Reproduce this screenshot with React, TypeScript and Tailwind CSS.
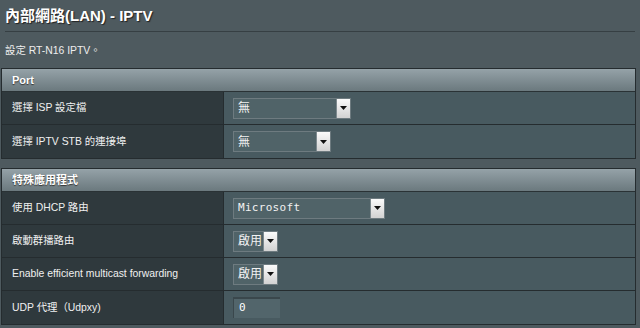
import React from "react";

const font = { fontFamily: '"Liberation Sans", Arial, "Noto Sans CJK TC", sans-serif' };

const Arrow = () => (
  <div className="w-[14px] h-[19px] flex items-center justify-center bg-gradient-to-b from-[#fbfbfb] to-[#d2d2d2] border-l border-[#7d898e]">
    <svg width="7" height="4" viewBox="0 0 7 4">
      <path d="M0 0h7L3.5 4z" fill="#111" />
    </svg>
  </div>
);

const Select = ({ value, width, mono }: { value: string; width: string; mono?: boolean }) => (
  <div className={`${width} h-[21px] flex items-stretch border border-[#6e7b80] bg-[#506368]`}>
    <div
      className={`flex-1 pl-[4px] flex items-center text-[#f2f2f2] ${mono ? "text-[11px] tracking-[0.3px]" : "text-[12px]"}`}
      style={mono ? { fontFamily: '"DejaVu Sans Mono", monospace' } : undefined}
    >
      {value}
    </div>
    <Arrow />
  </div>
);

const Row = ({ label, children, last }: { label: string; children: React.ReactNode; last?: boolean }) => (
  <div className={`flex h-[33px] ${last ? "" : "border-b border-[#252c2f]"}`}>
    <div className="w-[222px] bg-[#2f393d] border-r border-[#252c2f] pl-[10px] flex items-center text-[10.4px] text-[#f0f0f0]">
      {label}
    </div>
    <div className="flex-1 bg-[#485a60] pl-[9px] flex items-center">{children}</div>
  </div>
);

const Header = ({ title }: { title: string }) => (
  <div className="h-[23px] border-b border-[#2a3235] bg-gradient-to-b from-[#95a2a8] to-[#6b797e] pl-[10px] flex items-center text-[11px] font-bold text-white [text-shadow:0_1px_1px_#333]">
    {title}
  </div>
);

export default function App() {
  return (
    <div className="w-[640px] h-[328px] overflow-hidden bg-[#4e5a5f] pt-[6px]" style={font}>
      <div className="h-[20px] pl-[5px] leading-[20px] text-[15px] font-bold text-white [text-shadow:1px_1px_1px_#222]">
        內部網路(LAN) - IPTV
      </div>
      <div className="mt-[5px] mx-[5px] h-[1px] bg-[#363f43]" />
      <div className="mt-[10px] h-[18px] pl-[5px] leading-[18px] text-[10.4px] text-[#eeeeee]">設定 RT-N16 IPTV。</div>

      <div className="mt-[8px] ml-[1px] w-[635px] border border-[#252c2f]">
        <Header title="Port" />
        <Row label="選擇 ISP 設定檔">
          <Select value="無" width="w-[118px]" />
        </Row>
        <Row label="選擇 IPTV STB 的連接埠" last>
          <Select value="無" width="w-[98px]" />
        </Row>
      </div>

      <div className="mt-[9px] ml-[1px] w-[635px] border border-[#252c2f]">
        <Header title="特殊應用程式" />
        <Row label="使用 DHCP 路由">
          <Select value="Microsoft" width="w-[152px]" mono />
        </Row>
        <Row label="啟動群播路由">
          <Select value="啟用" width="w-[45px]" />
        </Row>
        <Row label="Enable efficient multicast forwarding">
          <Select value="啟用" width="w-[45px]" />
        </Row>
        <Row label="UDP 代理（Udpxy)" last>
          <div
            className="w-[47px] h-[21px] border-t-2 border-l border-[#3a474c] bg-[#52656b] pl-[5px] flex items-center text-[11px] text-white"
            style={{ fontFamily: '"DejaVu Sans Mono", monospace' }}
          >
            0
          </div>
        </Row>
      </div>
    </div>
  );
}
